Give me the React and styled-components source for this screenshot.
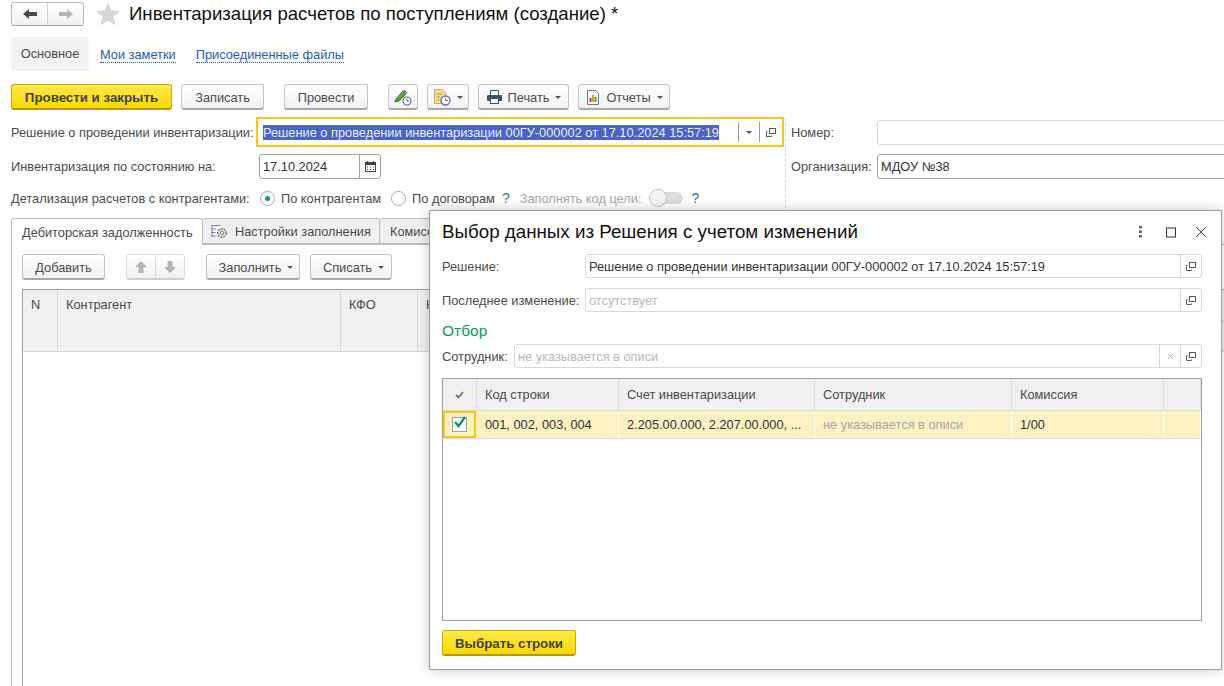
import React from 'react';
import styled, { createGlobalStyle } from 'styled-components';

const GlobalStyle = createGlobalStyle`
  html, body {
    margin: 0;
    padding: 0;
    background: #fff;
  }
  body {
    font-family: "Liberation Sans", Arial, sans-serif;
    font-size: 12.8px;
    color: #4b4b4b;
  }
`;

const Page = styled.div`
  position: relative;
  width: 1224px;
  height: 686px;
  overflow: hidden;
  background: #fff;
`;

const Header = styled.div`
  display: flex;
  align-items: center;
  height: 24px;
  padding: 2px 0 0 11px;
`;

const NavGroup = styled.div`
  display: flex;
  width: 73px;
  height: 24px;
  box-sizing: border-box;
  border: 1px solid #bcbcbc;
  border-bottom-color: #a0a0a0;
  border-radius: 3px;
  background: linear-gradient(#fff, #f2f2f2);
`;

const NavButton = styled.div`
  flex: 1;
  display: flex;
  align-items: center;
  justify-content: center;
  & + & {
    border-left: 1px solid #d4d4d4;
  }
`;

const Title = styled.h1`
  margin: 0 0 0 9px;
  font-size: 18.6px;
  font-weight: normal;
  color: #111;
  white-space: nowrap;
`;

const Sections = styled.div`
  display: flex;
  align-items: center;
  height: 34px;
  margin: 11px 0 0 11px;
`;

const SectionActive = styled.div`
  height: 34px;
  width: 78px;
  line-height: 34px;
  text-align: center;
  background: #f2f2f2;
  border-radius: 3px;
  margin-right: 11px;
`;

const SectionLink = styled.a`
  color: #1c5fae;
  border-bottom: 1px dotted #1c5fae;
  line-height: 14px;
  margin: 2px 20px 0 0;
`;

const CommandBar = styled.div`
  display: flex;
  height: 26px;
  margin: 13px 0 0 11px;
`;

const Btn = styled.div`
  display: flex;
  align-items: center;
  justify-content: center;
  gap: 6px;
  box-sizing: border-box;
  width: ${p => p.$w}px;
  margin-left: ${p => p.$gap || 0}px;
  height: ${p => p.$h || 26}px;
  padding: 1px 0 0 ${p => p.$shift || 0}px;
  border: 1px solid #c4c4c4;
  border-bottom: 2px solid #a8a8a8;
  border-radius: 3px;
  background: linear-gradient(#fff, #f1f1f1);
  white-space: nowrap;
`;

const DefaultBtn = styled(Btn)`
  border-color: #c9a900;
  border-bottom-color: #b39a00;
  background: linear-gradient(#ffe94a, #f9d800);
  font-size: 13.3px;
  font-weight: ${p => (p.$bold ? 'bold' : 'normal')};
  color: #444;
`;

const Caret = styled.span`
  width: 0;
  height: 0;
  border-left: 3px solid transparent;
  border-right: 3px solid transparent;
  border-top: 3px solid #555;
`;

const FormArea = styled.div`
  display: grid;
  grid-template-columns: 785px 1fr;
  height: 103px;
  margin-top: 5px;
`;

const FormLeft = styled.div`
  display: flex;
  flex-direction: column;
  padding-left: 11px;
`;

const FormRight = styled.div`
  display: flex;
  flex-direction: column;
  gap: 9px;
  padding: 2px 0 0 5px;
  border-left: 1px dashed #d4d4d4;
  margin-top: 3px;
`;

const Row = styled.div`
  display: flex;
  align-items: center;
  height: ${p => p.$h}px;
  margin-top: ${p => p.$top || 0}px;
  white-space: nowrap;
`;

const Label = styled.label`
  width: ${p => p.$w}px;
  flex: none;
  white-space: nowrap;
  color: ${p => (p.$muted ? '#a8a8a8' : 'inherit')};
`;

const FocusField = styled.div`
  display: flex;
  align-items: center;
  box-sizing: border-box;
  width: 528px;
  height: 30px;
  border: 2px solid #f8c51c;
  margin-left: -2px;
  padding-left: 5px;
`;

const Selected = styled.span`
  flex: 1;
  & > span {
    background: #4a64c0;
    color: #e8ecf8;
    line-height: 15px;
    display: inline-block;
  }
`;

const FieldCell = styled.div`
  display: flex;
  align-items: center;
  justify-content: center;
  flex: none;
  box-sizing: border-box;
  width: ${p => p.$w || 21}px;
  height: ${p => p.$h || 20}px;
  border-left: 1px solid ${p => p.$line || '#d8d8d8'};
`;

const Field = styled.div`
  display: flex;
  align-items: center;
  box-sizing: border-box;
  width: ${p => p.$w}px;
  height: ${p => p.$h || 25}px;
  flex: ${p => (p.$w ? 'none' : 1)};
  border: 1px solid ${p => (p.$strong ? '#a0a0a0' : '#d8d8d8')};
  border-radius: 3px;
  background: #fff;
  padding-left: 3px;
  color: ${p => (p.$hint ? '#b8b8b8' : '#333')};
`;

const FieldText = styled.span`
  flex: 1;
  white-space: nowrap;
  overflow: hidden;
`;

const RightField = styled(Field)`
  margin-right: -10px;
`;

const RadioDot = styled.span`
  display: inline-flex;
  align-items: center;
  justify-content: center;
  flex: none;
  box-sizing: border-box;
  width: 15px;
  height: 15px;
  margin: 0 6px 0 ${p => p.$gap || 0}px;
  border: 1px solid #a8a8a8;
  border-radius: 50%;
  background: #fff;
  &::after {
    content: '';
    display: ${p => (p.$on ? 'block' : 'none')};
    width: 5px;
    height: 5px;
    border-radius: 50%;
    background: #0a9a5a;
  }
`;

const Help = styled.span`
  color: #1c72b8;
  font-size: 14px;
  margin: 0 ${p => p.$after || 8}px 0 ${p => p.$before || 6}px;
`;

const Toggle = styled.span`
  position: relative;
  width: 34px;
  height: 12px;
  margin-left: 8px;
  border-radius: 6px;
  background: #dcdcdc;
  &::before {
    content: '';
    position: absolute;
    left: 0;
    top: -3px;
    width: 18px;
    height: 18px;
    box-sizing: border-box;
    border: 1px solid #c4c4c4;
    border-radius: 50%;
    background: #f4f4f4;
  }
`;

const TabBar = styled.div`
  display: flex;
  height: 27px;
  margin-left: 11px;
  border-bottom: 1px solid #bcbcbc;
  box-sizing: border-box;
`;

const Tab = styled.div`
  display: flex;
  align-items: center;
  gap: 7px;
  box-sizing: border-box;
  width: ${p => p.$w}px;
  height: ${p => (p.$active ? 27 : 26)}px;
  padding-left: ${p => p.$pad}px;
  border: 1px solid #bcbcbc;
  border-left-width: ${p => (p.$first ? 1 : 0)}px;
  border-bottom: ${p => (p.$active ? 'none' : '1px solid #bcbcbc')};
  border-radius: 3px 3px 0 0;
  background: ${p => (p.$active ? '#fff' : '#f0f0f0')};
  white-space: nowrap;
`;

const TabPanel = styled.div`
  margin-left: 11px;
  padding: 9px 0 0 10px;
  border-left: 1px solid #bcbcbc;
  height: 460px;
`;

const TableBar = styled.div`
  display: flex;
  height: 26px;
`;

const ArrowGroup = styled(Btn)`
  padding: 0;
  gap: 0;
  border-color: #dcdcdc;
  border-bottom-color: #d0d0d0;
`;

const ArrowCell = styled.span`
  flex: 1;
  height: 100%;
  display: flex;
  align-items: center;
  justify-content: center;
  & + & {
    border-left: 1px solid #dcdcdc;
  }
`;

const MainTable = styled.div`
  margin-top: 9px;
  height: 400px;
  border: 1px solid #a0a0a0;
  border-right: none;
`;

const MainHead = styled.div`
  display: grid;
  grid-template-columns: 35px 283px 77px 12px 1fr 200px;
  height: 61px;
  border-bottom: 1px solid #d4d4d4;
`;

const MainHeadCell = styled.div`
  padding: 7px 0 0 8px;
  background: #f0f0f0;
  border-right: 1px solid #d8d8d8;
  overflow: hidden;
`;

const MainHeadClipped = styled(MainHeadCell)`
  padding-right: 0;
  border-right: none;
`;

const MainHeadGroup = styled.div`
  background: #f0f0f0;
  & > div {
    height: 31px;
    box-sizing: border-box;
    border-bottom: 1px solid #d4d4d4;
  }
`;

/* dialog */

const Dialog = styled.div`
  position: absolute;
  left: 429px;
  top: 210px;
  box-sizing: border-box;
  width: 793px;
  height: 460px;
  padding: 0 19px 0 12px;
  background: #fff;
  border: 1px solid #a0a0a0;
  box-shadow: 0 0 12px rgba(0, 0, 0, 0.22);
`;

const DialogHead = styled.div`
  display: flex;
  align-items: center;
  height: 42px;
`;

const DialogTitle = styled.div`
  flex: 1;
  font-size: 18.75px;
  color: #111;
  white-space: nowrap;
`;

const HeadIcons = styled.div`
  display: flex;
  align-items: center;
  gap: 18px;
  margin-right: -5px;
`;

const DialogRow = styled.div`
  display: flex;
  align-items: center;
  height: 24px;
  margin-top: ${p => p.$top}px;
`;

const Subtitle = styled.div`
  margin-top: 8px;
  height: 24px;
  line-height: 22px;
  font-size: 15.5px;
  color: #0a9a5a;
`;

const Grid = styled.div`
  margin-top: 10px;
  box-sizing: border-box;
  height: 243px;
  border: 1px solid #a0a0a0;
`;

const GridRow = styled.div`
  display: grid;
  grid-template-columns: 34px 142px 196px 197px 152px 1fr;
  height: ${p => p.$h}px;
  background: ${p => p.$bg};
  border-bottom: 1px solid #dcdcdc;
  box-sizing: border-box;
`;

const HeadCell = styled.div`
  display: flex;
  align-items: center;
  justify-content: ${p => (p.$center ? 'center' : 'flex-start')};
  padding-left: ${p => (p.$center ? 0 : 8)}px;
  border-right: 1px solid #dcdcdc;
  white-space: nowrap;
`;

const DataCell = styled(HeadCell)`
  border-right-color: #fff;
  color: ${p => (p.$hint ? '#a8a8a8' : '#333')};
`;

const CheckCell = styled.div`
  display: flex;
  align-items: center;
  justify-content: center;
  box-sizing: border-box;
  margin: 0 1px 0 0;
  border: 2px solid #f8c51c;
`;

const CheckBox = styled.div`
  position: relative;
  box-sizing: border-box;
  width: 15px;
  height: 15px;
  background: #fff;
  border: 1px solid #a0a0a0;
`;

const CheckMark = styled.svg`
  position: absolute;
  left: 0;
  top: -3px;
`;

const DialogFooter = styled.div`
  margin-top: 9px;
`;

/* icons */

const OpenIcon = () => (
  <svg width="11" height="11" viewBox="0 0 11 11" fill="none" stroke="#5a5a5a">
    <rect x="3.5" y="1.5" width="6" height="5" />
    <path d="M1.5 4.5h-1v5h5v-1" />
  </svg>
);

const Arrow = ({ dir, color }) => (
  <svg width="14" height="12" viewBox="0 0 14 12" fill={color}>
    <path d={dir === 'left' ? 'M0 6l6-5v3h8v4H6v3z' : 'M14 6L8 1v3H0v4h8v3z'} />
  </svg>
);

const VArrow = ({ up }) => (
  <svg width="12" height="12" viewBox="0 0 12 12" fill="#b4b4b4">
    <path d={up ? 'M6 0l6 6H8.5v6h-5V6H0z' : 'M6 12L0 6h3.5V0h5v6H12z'} />
  </svg>
);

const Star = () => (
  <svg width="24" height="24" viewBox="0 0 24 24" fill="#d6d6d6" style={{ marginLeft: 12 }}>
    <path d="M12 .5l3.4 8 8.6.7-6.5 5.6 2 8.4-7.5-4.5-7.5 4.5 2-8.4L0 9.2l8.6-.7z" />
  </svg>
);

const PencilIcon = () => (
  <svg width="18" height="18" viewBox="0 0 18 18">
    <path d="M2 11L9 3l3 3-7 7-4 1z" fill="#5aa63c" stroke="#3a7a28" />
    <path d="M9 3l1.5-1.5 3 3L12 6z" fill="#8a8a8a" />
    <circle cx="13" cy="13" r="4" fill="#fff" stroke="#4f6b85" strokeWidth="1.2" />
    <path d="M13 10.5V13h2" fill="none" stroke="#4f6b85" />
  </svg>
);

const DocClockIcon = () => (
  <svg width="18" height="18" viewBox="0 0 18 18">
    <path d="M1.5 1.5h8l3 3v11h-11z" fill="#f6dc9a" stroke="#d8aa48" />
    <path d="M3.5 6h6M3.5 9h4M3.5 12h3" stroke="#c89a3c" />
    <circle cx="12.5" cy="12.5" r="4.5" fill="#fff" stroke="#5a76a8" strokeWidth="1.4" />
    <path d="M12.5 10v2.5H15" fill="none" stroke="#c0504d" />
  </svg>
);

const PrintIcon = () => (
  <svg width="15" height="14" viewBox="0 0 15 14">
    <path d="M3.5 5V.5h8V5" fill="#fff" stroke="#33576f" />
    <rect x="0" y="5" width="15" height="6" rx="1" fill="#33576f" />
    <rect x="3.5" y="8.5" width="8" height="5" fill="#fff" stroke="#33576f" />
  </svg>
);

const ReportIcon = () => (
  <svg width="14" height="15" viewBox="0 0 14 15">
    <path d="M1.5.5h8l3 3v11h-11z" fill="#fff" stroke="#777" />
    <rect x="3.5" y="8" width="2" height="4" fill="#c0392b" />
    <rect x="6" y="5" width="2" height="7" fill="#d9a520" />
    <rect x="8.5" y="7" width="2" height="5" fill="#3a9a4a" />
  </svg>
);

const CalendarIcon = () => (
  <svg width="11" height="11" viewBox="0 0 11 11">
    <path d="M2.5 0v2M8.5 0v2" stroke="#444" />
    <rect x=".5" y="1.5" width="10" height="9" fill="#fff" stroke="#444" />
    <rect x="0" y="1" width="11" height="3" fill="#444" />
    <path d="M2 6h1M5 6h1M8 6h1M2 8.5h1M5 8.5h1M8 8.5h1" stroke="#444" />
  </svg>
);

const SettingsIcon = () => (
  <svg width="17" height="15" viewBox="0 0 17 15" fill="none">
    <path d="M.5 1.5h9M.5 5h4M.5 8.5h4M.5 12h4M1 1v12" stroke="#6f8db5" />
    <circle cx="11" cy="9" r="4.2" stroke="#777" strokeWidth="1.6" strokeDasharray="2 1" />
    <circle cx="11" cy="9" r="1.8" stroke="#777" />
  </svg>
);

const App = () => (
  <Page>
    <GlobalStyle />
    <Header>
      <NavGroup>
        <NavButton><Arrow dir="left" color="#4b4b4b" /></NavButton>
        <NavButton><Arrow dir="right" color="#b4b4b4" /></NavButton>
      </NavGroup>
      <Star />
      <Title>Инвентаризация расчетов по поступлениям (создание) *</Title>
    </Header>

    <Sections>
      <SectionActive>Основное</SectionActive>
      <SectionLink>Мои заметки</SectionLink>
      <SectionLink>Присоединенные файлы</SectionLink>
    </Sections>

    <CommandBar>
      <DefaultBtn $w={161} $bold>Провести и закрыть</DefaultBtn>
      <Btn $w={83} $gap={9}>Записать</Btn>
      <Btn $w={84} $gap={20}>Провести</Btn>
      <Btn $w={30} $gap={20}><PencilIcon /></Btn>
      <Btn $w={42} $gap={9}><DocClockIcon /><Caret /></Btn>
      <Btn $w={91} $gap={9} $shift={1}><PrintIcon />Печать<Caret /></Btn>
      <Btn $w={92} $gap={9} $shift={1}><ReportIcon />Отчеты<Caret /></Btn>
    </CommandBar>

    <FormArea>
      <FormLeft>
        <Row $h={30} $top={2}>
          <Label $w={247}>Решение о проведении инвентаризации:</Label>
          <FocusField>
            <Selected><span>Решение о проведении инвентаризации 00ГУ-000002 от 17.10.2024 15:57:19</span></Selected>
            <FieldCell $line="#999"><Caret /></FieldCell>
            <FieldCell $line="#999" $w={23}><OpenIcon /></FieldCell>
          </FocusField>
        </Row>
        <Row $h={25} $top={7}>
          <Label $w={248}>Инвентаризация по состоянию на:</Label>
          <Field $w={122} $strong>
            <FieldText>17.10.2024</FieldText>
            <FieldCell $line="#a0a0a0" $h={23}><CalendarIcon /></FieldCell>
          </Field>
        </Row>
        <Row $h={20} $top={9}>
          <Label $w={249}>Детализация расчетов с контрагентами:</Label>
          <RadioDot $on />По контрагентам
          <RadioDot $gap={10} />По договорам
          <Help $before={7} $after={10}>?</Help>
          <Label as="span" $muted>Заполнять код цели:</Label>
          <Toggle />
          <Help $before={8}>?</Help>
        </Row>
      </FormLeft>
      <FormRight>
        <Row $h={25}>
          <Label $w={86}>Номер:</Label>
          <RightField />
        </Row>
        <Row $h={25}>
          <Label $w={86}>Организация:</Label>
          <RightField $strong>МДОУ №38</RightField>
        </Row>
      </FormRight>
    </FormArea>

    <TabBar>
      <Tab $w={192} $pad={10} $first $active>Дебиторская задолженность</Tab>
      <Tab $w={177} $pad={8}><SettingsIcon />Настройки заполнения</Tab>
      <Tab $w={200} $pad={10}>Комиссия</Tab>
    </TabBar>

    <TabPanel>
      <TableBar>
        <Btn $w={83}>Добавить</Btn>
        <ArrowGroup $w={59} $gap={21}>
          <ArrowCell><VArrow up /></ArrowCell>
          <ArrowCell><VArrow /></ArrowCell>
        </ArrowGroup>
        <Btn $w={94} $gap={21} $shift={6}>Заполнить<Caret /></Btn>
        <Btn $w={82} $gap={10} $shift={5}>Списать<Caret /></Btn>
      </TableBar>
      <MainTable>
        <MainHead>
          <MainHeadCell>N</MainHeadCell>
          <MainHeadCell>Контрагент</MainHeadCell>
          <MainHeadCell>КФО</MainHeadCell>
          <MainHeadClipped>Н</MainHeadClipped>
          <MainHeadCell />
          <MainHeadGroup><div /></MainHeadGroup>
        </MainHead>
      </MainTable>
    </TabPanel>

    <Dialog>
      <DialogHead>
        <DialogTitle>Выбор данных из Решения с учетом изменений</DialogTitle>
        <HeadIcons>
          <svg width="4" height="12" viewBox="0 0 4 12" fill="#666">
            <rect x="1" y="0" width="3" height="2.5" />
            <rect x="1" y="4.5" width="3" height="2.5" />
            <rect x="1" y="9" width="3" height="2.5" />
          </svg>
          <svg width="11" height="11" viewBox="0 0 11 11" fill="none" stroke="#333" style={{ marginLeft: 6 }}>
            <rect x=".5" y="1" width="9" height="9" />
          </svg>
          <svg width="12" height="12" viewBox="0 0 12 12" fill="none" stroke="#444">
            <path d="M1 1l10 10M11 1L1 11" />
          </svg>
        </HeadIcons>
      </DialogHead>
      <DialogRow $top={1}>
        <Label $w={143}>Решение:</Label>
        <Field $h={24}>
          <FieldText>Решение о проведении инвентаризации 00ГУ-000002 от 17.10.2024 15:57:19</FieldText>
          <FieldCell $h={22}><OpenIcon /></FieldCell>
        </Field>
      </DialogRow>
      <DialogRow $top={10}>
        <Label $w={143}>Последнее изменение:</Label>
        <Field $h={24} $hint>
          <FieldText>отсутствует</FieldText>
          <FieldCell $h={22}><OpenIcon /></FieldCell>
        </Field>
      </DialogRow>
      <Subtitle>Отбор</Subtitle>
      <DialogRow $top={0}>
        <Label $w={72}>Сотрудник:</Label>
        <Field $h={24} $hint>
          <FieldText>не указывается в описи</FieldText>
          <FieldCell $h={22}>
            <svg width="7" height="7" viewBox="0 0 7 7" fill="none" stroke="#b4b4b4">
              <path d="M1 1l5 5M6 1L1 6" />
            </svg>
          </FieldCell>
          <FieldCell $h={22}><OpenIcon /></FieldCell>
        </Field>
      </DialogRow>
      <Grid>
        <GridRow $h={32} $bg="#f0f0f0">
          <HeadCell $center>
            <svg width="9" height="8" viewBox="0 0 9 8" fill="none" stroke="#7a7460" strokeWidth="1.8">
              <path d="M1 4l2.5 2.5L8 1" />
            </svg>
          </HeadCell>
          <HeadCell>Код строки</HeadCell>
          <HeadCell>Счет инвентаризации</HeadCell>
          <HeadCell>Сотрудник</HeadCell>
          <HeadCell>Комиссия</HeadCell>
          <HeadCell />
        </GridRow>
        <GridRow $h={28} $bg="#fdf0c3">
          <CheckCell>
            <CheckBox>
              <CheckMark width="14" height="14" viewBox="0 0 14 14" fill="none" stroke="#0a9a5a" strokeWidth="2.4">
                <path d="M2 7l3.5 4L12 2" />
              </CheckMark>
            </CheckBox>
          </CheckCell>
          <DataCell>001, 002, 003, 004</DataCell>
          <DataCell>2.205.00.000, 2.207.00.000, ...</DataCell>
          <DataCell $hint>не указывается в описи</DataCell>
          <DataCell>1/00</DataCell>
          <DataCell />
        </GridRow>
      </Grid>
      <DialogFooter>
        <DefaultBtn $w={134} $h={26} $bold>Выбрать строки</DefaultBtn>
      </DialogFooter>
    </Dialog>
  </Page>
);

export default App;
